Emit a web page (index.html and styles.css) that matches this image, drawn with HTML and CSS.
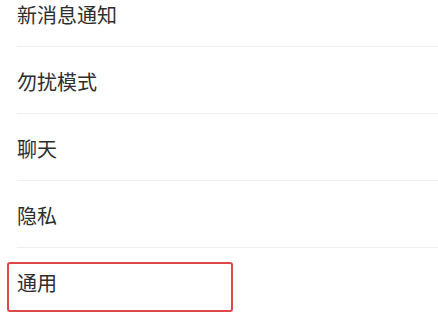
FILE: index.html
```html
<!DOCTYPE html>
<html lang="zh-CN">
<head>
<meta charset="utf-8">
<link rel="stylesheet" href="styles.css">
</head>
<body>
<ul class="settings">
  <li class="item">新消息通知</li>
  <li class="item">勿扰模式</li>
  <li class="item">聊天</li>
  <li class="item">隐私</li>
  <li class="item item-last"><div class="highlight">通用</div></li>
</ul>
</body>
</html>
```
FILE: styles.css
```css
html, body {
  margin: 0;
  padding: 0;
  background: #ffffff;
  width: 438px;
  height: 315px;
  overflow: hidden;
}
body {
  font-family: "Noto Sans CJK SC", "Noto Sans", sans-serif;
  color: #2e2e2e;
}
.settings {
  list-style: none;
  margin: -20px 0 0 0;
  padding: 0 0 0 17px;
}
.item {
  box-sizing: border-box;
  height: 67px;
  padding-top: 4px;
  display: flex;
  align-items: center;
  font-size: 20px;
  line-height: 20px;
  border-bottom: 1px solid #f0f0f0;
}
.item-last {
  border-bottom: none;
  align-items: flex-start;
  padding-top: 14px;
}
.highlight {
  box-sizing: border-box;
  margin-left: -10px;
  width: 226px;
  height: 50px;
  padding: 9px 0 0 8px;
  border: 2px solid #e04848;
  border-radius: 3px;
}
```
